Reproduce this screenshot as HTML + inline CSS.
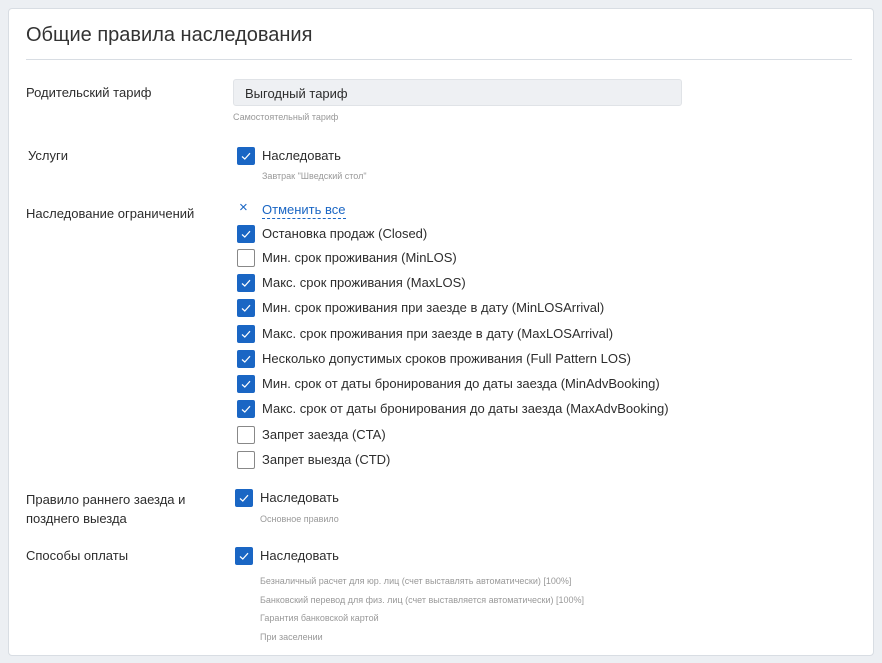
<!DOCTYPE html>
<html><head><meta charset="utf-8"><style>
body{margin:0;width:882px;height:663px;background:#eceff3;font-family:"Liberation Sans",sans-serif;color:#333;position:relative;overflow:hidden}
.card{position:absolute;left:8px;top:8px;width:864px;height:646px;background:#fff;border:1px solid #d8dde3;border-radius:4px}
.a{position:absolute;white-space:nowrap}
.t{font-size:13px;color:#2d2d2d}
.s{font-size:9px;color:#999}
.cb{position:absolute;width:18px;height:18px;border-radius:2px;background:#1a66c4;box-sizing:border-box}
.cb.off{background:#fff;border:1px solid #888}
.cb svg{position:absolute;left:3px;top:4px}
</style></head><body>
<div class="card"></div>
<div class="a" style="left:26px;top:24px;font-size:20px;color:#333">Общие правила наследования</div>
<div class="a" style="left:26px;top:59px;width:826px;height:1px;background:#d8dde3"></div>
<div class="a t" style="left:26px;top:85px">Родительский тариф</div>
<div class="a" style="left:233px;top:79px;width:449px;height:27px;background:#eef0f3;border:1px solid #e0e3e7;border-radius:3px;box-sizing:border-box"></div>
<div class="a t" style="left:245px;top:86px">Выгодный тариф</div>
<div class="a s" style="left:233px;top:112px">Самостоятельный тариф</div>
<div class="a t" style="left:28px;top:148px">Услуги</div>
<div class="a t" style="left:26px;top:206px">Наследование ограничений</div>
<div class="a t" style="left:26px;top:490px;line-height:19px">Правило раннего заезда и<br>позднего выезда</div>
<div class="a t" style="left:26px;top:548px">Способы оплаты</div>
<div class="a s" style="left:262px;top:171px">Завтрак "Шведский стол"</div>
<div class="a" style="left:239px;top:199px;font-size:15px;color:#1a66c4;font-weight:300">×</div>
<div class="a t" style="left:262px;top:202px;color:#1a66c4;border-bottom:1px dashed #1a66c4;padding-bottom:1px">Отменить все</div>
<div class="a s" style="left:260px;top:514px">Основное правило</div>
<div class="a s" style="left:260px;top:572px;line-height:18.5px">Безналичный расчет для юр. лиц (счет выставлять автоматически) [100%]<br>Банковский перевод для физ. лиц (счет выставляется автоматически) [100%]<br>Гарантия банковской картой<br>При заселении</div>
<div id="rows"></div>
<script>
var R=[[237,147,1,"Наследовать"],[237,225,1,"Остановка продаж (Closed)"],[237,249,0,"Мин. срок проживания (MinLOS)"],[237,274,1,"Макс. срок проживания (MaxLOS)"],[237,299,1,"Мин. срок проживания при заезде в дату (MinLOSArrival)"],[237,325,1,"Макс. срок проживания при заезде в дату (MaxLOSArrival)"],[237,350,1,"Несколько допустимых сроков проживания (Full Pattern LOS)"],[237,375,1,"Мин. срок от даты бронирования до даты заезда (MinAdvBooking)"],[237,400,1,"Макс. срок от даты бронирования до даты заезда (MaxAdvBooking)"],[237,426,0,"Запрет заезда (CTA)"],[237,451,0,"Запрет выезда (CTD)"],[235,489,1,"Наследовать"],[235,547,1,"Наследовать"]];
var h="";R.forEach(function(r){h+='<div class="cb'+(r[2]?'':' off')+'" style="left:'+r[0]+'px;top:'+r[1]+'px">'+(r[2]?'<svg width="12" height="10" viewBox="0 0 12 10"><path d="M2 5.5L4.8 8L10 2.2" stroke="#fff" stroke-width="1.2" fill="none"/></svg>':'')+'</div><div class="a t" style="left:'+(r[0]+25)+'px;top:'+(r[1]+1)+'px">'+r[3]+'</div>';});
document.getElementById("rows").innerHTML=h;
</script>
</body></html>
